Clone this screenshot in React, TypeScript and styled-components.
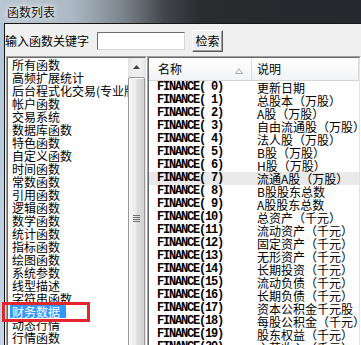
import React from 'react';
import styled, { createGlobalStyle } from 'styled-components';

const CJK = `"Noto Sans CJK SC", "Liberation Sans", sans-serif`;

const GlobalStyle = createGlobalStyle`
  html, body { margin: 0; padding: 0; background: #f0f0f0; }
  body { font-family: ${CJK}; }
  * { box-sizing: border-box; }
`;

const Screen = styled.div`
  width: 361px;
  height: 345px;
  overflow: hidden;
  display: flex;
  flex-direction: column;
`;

const TitleBar = styled.div`
  height: 23px;
  flex: none;
  display: flex;
  align-items: center;
  padding-left: 7px;
  background: linear-gradient(
    to right,
    #bac7d2 0px,
    #adbac5 70px,
    #7f8891 120px,
    #41454a 165px,
    #292b2f 200px,
    #25282c 100%
  );
  font: 12px/1 ${CJK};
  color: #111;
  text-shadow: 0 0 4px #fff, 0 0 7px #fff;
`;

const Frame = styled.div`
  flex: 1;
  display: flex;
  min-height: 0;
`;

const FrameEdge = styled.div`
  width: 4px;
  flex: none;
  background: linear-gradient(to bottom, #b2c6d9, #c4d5e5);
`;

const Body = styled.div`
  flex: 1;
  min-width: 0;
  background: #f0f0f0;
  border-top: 1px solid #151515;
  border-left: 1px solid #151515;
  display: flex;
  flex-direction: column;
`;

const SearchRow = styled.div`
  display: flex;
  align-items: center;
  height: 22px;
  margin-top: 6px;
  flex: none;
`;

const Label = styled.label`
  font: 12px/14px ${CJK};
  color: #000;
  white-space: nowrap;
`;

const KeywordInput = styled.input`
  width: 88px;
  height: 18px;
  margin: 0 0 0 8px;
  padding: 0 2px;
  background: #fff;
  border: 1px solid;
  border-color: #6d6d6d #d8d8d8 #d8d8d8 #6d6d6d;
  outline: none;
  font: 12px ${CJK};
`;

const SearchButton = styled.button`
  width: 31px;
  height: 22px;
  margin-left: 7px;
  padding: 0;
  background: #f0f0f0;
  border: 1px solid;
  border-color: #ffffff #5a5a5a #5a5a5a #ffffff;
  box-shadow: inset -1px -1px 0 #a0a0a0;
  font: 12px/1 ${CJK};
  color: #000;
`;

const Panels = styled.div`
  position: relative;
  display: flex;
  margin-top: 4px;
  height: 320px;
  flex: none;
`;

const SunkenOuter = styled.div<{ $w?: number }>`
  ${(p) => (p.$w ? `width: ${p.$w}px; flex: none;` : 'flex: 1; min-width: 0;')}
  border: 1px solid;
  border-color: #a0a0a0 #ffffff #ffffff #a0a0a0;
  display: flex;
`;

const SunkenInner = styled.div<{ $column?: boolean }>`
  flex: 1;
  min-width: 0;
  background: #fff;
  border: 1px solid;
  border-color: #696969 #e3e3e3 #e3e3e3 #696969;
  display: flex;
  flex-direction: ${(p) => (p.$column ? 'column' : 'row')};
  overflow: hidden;
`;

const LeftWrap = styled.div`
  margin-left: 1px;
  display: flex;
`;

const ItemList = styled.ul`
  list-style: none;
  margin: 0;
  padding: 0 0 0 2px;
  flex: 1;
  min-width: 0;
  overflow: hidden;
`;

const Item = styled.li`
  height: 13px;
  font: 12px/13px ${CJK};
  white-space: nowrap;
`;

const ItemText = styled.span<{ $selected?: boolean }>`
  display: inline-block;
  height: 13px;
  padding: 0 6px 0 2px;
  background: ${(p) => (p.$selected ? '#3399ff' : 'transparent')};
  color: ${(p) => (p.$selected ? '#fff' : '#000')};
`;

const ScrollBar = styled.div`
  width: 17px;
  flex: none;
  display: flex;
  flex-direction: column;
  background: linear-gradient(to right, #e2e2e2, #eeeeee 25%, #f0f0f0 75%, #e6e6e6);
`;

const ScrollArrow = styled.div`
  height: 17px;
  flex: none;
  display: flex;
  align-items: center;
  justify-content: center;
`;

const Thumb = styled.div`
  margin: 2px 0 0 0;
  height: 282px;
  flex: none;
  border: 1px solid #979797;
  border-radius: 2px;
  background: linear-gradient(to right, #f4f4f4, #ececec 45%, #dcdcdc 55%, #d3d3d3);
  box-shadow: inset 1px 1px 0 #fbfbfb;
  display: flex;
  align-items: center;
  justify-content: center;
`;

const Grip = styled.div`
  width: 7px;
  height: 7px;
  background: repeating-linear-gradient(to bottom, #6e6e6e 0 1px, transparent 1px 2px);
`;

const ListView = styled.div`
  display: flex;
  flex-direction: column;
  width: 100%;
`;

const Header = styled.div`
  display: flex;
  height: 23px;
  flex: none;
  border-bottom: 1px solid #d5d5d5;
  background: linear-gradient(#ffffff, #f2f3f5);
  font: 12px/1 ${CJK};
  color: #000;
`;

const HeaderCell = styled.div<{ $w?: number; $pad: number }>`
  ${(p) => (p.$w ? `width: ${p.$w}px; flex: none;` : 'flex: 1;')}
  display: flex;
  align-items: center;
  padding-left: ${(p) => p.$pad}px;
  border-right: 1px solid #dcdcdc;
  white-space: nowrap;
`;

const SortMark = styled.svg`
  margin-left: auto;
  margin-right: 8px;
  margin-top: 3px;
`;

const Row = styled.div<{ $hot?: boolean }>`
  display: flex;
  height: 13px;
  flex: none;
  background: ${(p) => (p.$hot ? '#e9e9e9' : 'transparent')};
`;

const NameCell = styled.div`
  width: 103px;
  flex: none;
  padding-left: 8px;
  font: bold 12px/13px "Liberation Mono", monospace;
  letter-spacing: -1.2px;
  white-space: pre;
  color: #000;
`;

const DescCell = styled.div`
  padding-left: 5px;
  font: 12px/13px ${CJK};
  white-space: nowrap;
  color: #000;
`;

const Annotation = styled.div`
  position: absolute;
  left: -3px;
  top: 246px;
  width: 88px;
  height: 20px;
  border: 3px solid #e3262c;
  pointer-events: none;
`;

const categories = [
  '所有函数',
  '高频扩展统计',
  '后台程式化交易(专业版)',
  '帐户函数',
  '交易系统',
  '数据库函数',
  '特色函数',
  '自定义函数',
  '时间函数',
  '常数函数',
  '引用函数',
  '逻辑函数',
  '数学函数',
  '统计函数',
  '指标函数',
  '绘图函数',
  '系统参数',
  '线型描述',
  '字符串函数',
  '财务数据',
  '动态行情',
  '行情函数',
  '其他函数',
];

const finance = [
  '更新日期',
  '总股本（万股）',
  'A股（万股）',
  '自由流通股（万股）',
  '法人股（万股）',
  'B股（万股）',
  'H股（万股）',
  '流通A股（万股）',
  'B股股东总数',
  'A股股东总数',
  '总资产（千元）',
  '流动资产（千元）',
  '固定资产（千元）',
  '无形资产（千元）',
  '长期投资（千元）',
  '流动负债（千元）',
  '长期负债（千元）',
  '资本公积金千元股',
  '每股公积金（千元）',
  '股东权益（千元）',
  '主营收入（千元）',
];

const fmt = (i: number) => `FINANCE(${i < 10 ? ' ' + i : String(i)})`;

export default function App() {
  return (
    <>
      <GlobalStyle />
      <Screen>
        <TitleBar>函数列表</TitleBar>
        <Frame>
          <FrameEdge />
          <Body>
            <SearchRow>
              <Label>输入函数关键字</Label>
              <KeywordInput />
              <SearchButton>检索</SearchButton>
            </SearchRow>
            <Panels>
              <LeftWrap>
                <SunkenOuter $w={141}>
                  <SunkenInner>
                    <ItemList>
                      {categories.map((c) => (
                        <Item key={c}>
                          <ItemText $selected={c === '财务数据'}>{c}</ItemText>
                        </Item>
                      ))}
                    </ItemList>
                    <ScrollBar>
                      <ScrollArrow>
                        <svg width="7" height="4" viewBox="0 0 7 4">
                          <path d="M0 4 L3.5 0 L7 4 Z" fill="#404040" />
                        </svg>
                      </ScrollArrow>
                      <Thumb>
                        <Grip />
                      </Thumb>
                    </ScrollBar>
                  </SunkenInner>
                </SunkenOuter>
              </LeftWrap>
              <SunkenOuter>
                <SunkenInner $column>
                  <ListView>
                    <Header>
                      <HeaderCell $w={103} $pad={9}>
                        名称
                        <SortMark width="8" height="6" viewBox="0 0 8 6">
                          <path d="M0.5 5.5 L4 0.8 L7.5 5.5 Z" fill="none" stroke="#a8a8a8" strokeWidth="1" />
                        </SortMark>
                      </HeaderCell>
                      <HeaderCell $pad={5}>说明</HeaderCell>
                    </Header>
                    {finance.map((d, i) => (
                      <Row key={i} $hot={i === 7}>
                        <NameCell>{fmt(i)}</NameCell>
                        <DescCell>{d}</DescCell>
                      </Row>
                    ))}
                  </ListView>
                </SunkenInner>
              </SunkenOuter>
              <Annotation />
            </Panels>
          </Body>
        </Frame>
      </Screen>
    </>
  );
}
